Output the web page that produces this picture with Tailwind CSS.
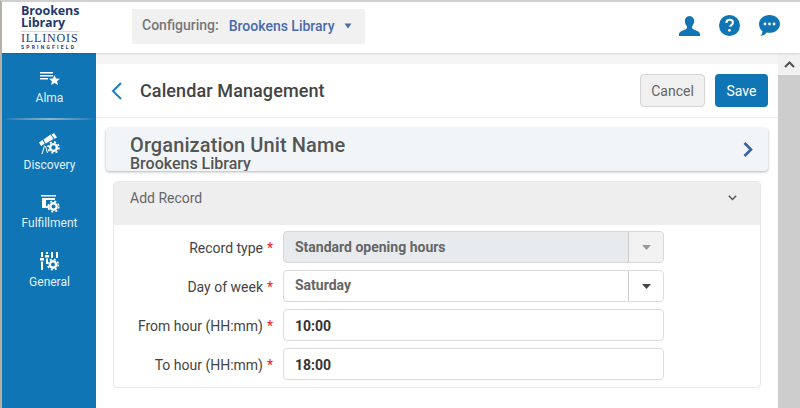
<!DOCTYPE html>
<html lang="en">
<head>
  <meta charset="UTF-8" />
  <title>Calendar Management</title>
  <script src="https://cdn.jsdelivr.net/npm/@tailwindcss/browser@4"></script>
</head>
<body class="font-['Roboto',sans-serif] bg-white text-[#444]">
  <div class="w-[800px] h-[408px] overflow-hidden flex flex-col border-t-2 border-t-[#d0d0d0] border-l-2 border-l-[#b5b0a8]">

    <!-- top bar -->
    <header class="h-[51px] shrink-0 flex items-center bg-white shadow-[0_1px_2px_rgba(0,0,0,0.12)] relative z-10">
      <div class="w-[130px] pl-[19px] shrink-0 flex flex-col text-[#1f3a6e]">
        <div class="text-[12.5px] leading-[11.5px] font-bold tracking-[-0.1px] font-['Open_Sans',sans-serif]">Brookens<br />Library</div>
        <div class="mt-[3px] w-[58px] border-t border-[#d5dbe6] pt-[1px] font-['Liberation_Serif',serif] text-[12px] leading-[11px] tracking-[0.85px]">ILLINOIS</div>
        <div class="mt-[1px] text-[5px] leading-[5px] tracking-[2.2px] font-bold whitespace-nowrap">SPRINGFIELD</div>
      </div>
      <div class="w-[233px] h-[35px] bg-[#f1f1f1] flex items-center pl-[10px] mb-[2px]">
        <span class="text-[14px] text-[#777] font-medium mb-[3px]">Configuring:</span>
        <span class="ml-[10px] text-[14px] text-[#4a69ae] font-medium">Brookens Library</span>
        <svg class="ml-[9px] mb-[1px]" width="8" height="6" viewBox="0 0 8 6"><path d="M0.5 0.5h7L4 5.500z" fill="#4a69ae" /></svg>
      </div>
      <div class="ml-auto flex items-center gap-[19px] pr-[20px] mb-[4px]">
        <svg width="21" height="20" viewBox="0 0 21 20" fill="#0f75b5"><path d="M10.500 0c3 0 4.600 2.200 4.600 5 0 2-.8 4-2 5.200v1.800c0 .8 1.200 1.300 3 2 2.400 1 4.400 1.700 4.900 3.800V20H0v-2.200c.5-2.100 2.500-2.800 4.900-3.800 1.800-.7 3-1.200 3-2v-1.800c-1.200-1.200-2-3.200-2-5.200 0-2.800 1.600-5 4.600-5z" /></svg>
        <svg width="21" height="21" viewBox="0 0 21 21"><circle cx="10.500" cy="10.500" r="10.500" fill="#0f75b5" /><path d="M7.300 8c.1-2 1.500-3.200 3.400-3.200 1.900 0 3.200 1.100 3.200 2.700 0 1.300-.7 2-1.600 2.600-.8.500-1 .8-1 1.700" fill="none" stroke="#fff" stroke-width="2" /><circle cx="10.400" cy="15.300" r="1.400" fill="#fff" /></svg>
        <svg width="21" height="21" viewBox="0 0 21 21"><path d="M10.500 0C16.300 0 21 3.900 21 8.900s-4.700 8.900-10.500 8.900c-1 0-1.900-.1-2.800-.3C6.500 19.200 4.300 20.600 1.500 21c1.100-1.200 1.800-2.700 2-4.800C1.300 14.600 0 11.900 0 8.900 0 3.900 4.700 0 10.500 0z" fill="#0f75b5" /><circle cx="6" cy="9" r="1.400" fill="#fff" /><circle cx="10.500" cy="9" r="1.400" fill="#fff" /><circle cx="15" cy="9" r="1.400" fill="#fff" /></svg>
      </div>
    </header>

    <div class="flex flex-1 min-h-0">
      <!-- left nav -->
      <nav class="w-[94px] shrink-0 pl-[1px] bg-[#0f75b5] text-[#e4f0f8] text-[12px] flex flex-col items-center">
        <div class="h-[65px] w-full flex flex-col items-center pt-[19px]">
          <svg width="20" height="14" viewBox="0 0 20 14" fill="#fff"><path d="M0 0h13v1.600H0zM0 3h13v1.600H0zM0 6h8v1.600H0z" /><path d="M14.500 3l1.500 3.500 4 .3-3 2.500 1 3.700-3.500-2L11 13l1-3.700-3-2.500 4-.3z" /></svg>
          <span class="mt-[5px] leading-[14px]">Alma</span>
        </div>
        <div class="h-[2px] w-full bg-linear-to-r from-[#0f75b5] via-[#8fb4cc] to-[#0f75b5]"></div>
        <div class="mt-[13px] flex flex-col items-center">
          <svg width="21" height="22" viewBox="0 0 21 22" fill="#fff"><path d="M0 9.500l3.500-2.500 2.200 3.500L2.200 13zM4.500 6.500l7-5 3 4.500-7.800 4.500zM12.500 1.500L15 0l3 4.500-2.300 1.200z" /><path d="M5.500 12.500L3 21M6.500 13l2 7" stroke="#fff" fill="none" /><circle cx="14.500" cy="14.500" r="3.400" fill="none" stroke="#fff" stroke-width="2.400" /><circle cx="14.500" cy="14.500" r="5.500" fill="none" stroke="#fff" stroke-width="1.600" stroke-dasharray="2 2.300" /></svg>
          <span class="mt-[3px] leading-[14px]">Discovery</span>
        </div>
        <div class="mt-[23px] flex flex-col items-center">
          <svg width="20" height="18" viewBox="0 0 20 18" fill="#fff"><path d="M1 0h15v1.500H1zM2 3h13v2H6v6h3v2H2z" /><circle cx="13.500" cy="11.500" r="3.200" fill="none" stroke="#fff" stroke-width="2.400" /><circle cx="13.500" cy="11.500" r="5.300" fill="none" stroke="#fff" stroke-width="1.600" stroke-dasharray="2 2.200" /></svg>
          <span class="mt-[3px] leading-[14px]">Fulfillment</span>
        </div>
        <div class="mt-[22px] flex flex-col items-center">
          <svg width="20" height="19" viewBox="0 0 20 19" fill="#fff"><path d="M1 0h2v5H1zM0 6h4v2.500H0zM1 9.500h2V18H1zM6 0h2v2H6zM5 3h4v2.500H5zM6 6.500h2V12H6zM11 0h2v6h-2zM16 0h2v6h-2z" /><circle cx="13" cy="12.500" r="3.200" fill="none" stroke="#fff" stroke-width="2.400" /><circle cx="13" cy="12.500" r="5.300" fill="none" stroke="#fff" stroke-width="1.600" stroke-dasharray="2 2.200" /></svg>
          <span class="mt-[4px] leading-[14px]">General</span>
        </div>
      </nav>

      <!-- main column -->
      <main class="w-[682px] shrink-0 bg-[#f5f5f5] pt-[11px] min-h-0">
        <div class="bg-white h-full">
          <div class="h-[54px] flex items-center border-b border-[#f0f0f0] pr-[10px]">
            <svg class="ml-[15px]" width="11" height="18" viewBox="0 0 11 18"><path d="M10 1L2 9l8 8" fill="none" stroke="#1a7fc1" stroke-width="2" /></svg>
            <h1 class="ml-[18px] text-[18px] font-medium text-[#444] tracking-[0.1px]">Calendar Management</h1>
            <button class="ml-auto w-[65px] h-[33px] pt-[1px] rounded-[4px] bg-[#f0f0f0] border border-[#d4d4d4] text-[14px] text-[#666]">Cancel</button>
            <button class="ml-[10px] w-[53px] h-[33px] pt-[1px] rounded-[4px] bg-[#0f75b5] text-[14px] text-white">Save</button>
          </div>

          <div class="mt-[10px] ml-[10px] w-[662px] h-[43px] rounded-[4px] bg-[#f1f5f7] shadow-[0_1px_3px_rgba(0,0,0,0.3)] flex items-center justify-between pl-[24px] pr-[15px]">
            <div class="h-[43px] flex flex-col text-[#555] font-medium overflow-hidden">
              <div class="h-[22px] mt-[6px] overflow-hidden text-[20px] leading-[22px] tracking-[0.1px]">Organization Unit Name</div>
              <div class="text-[16px] leading-[15px]">Brookens Library</div>
            </div>
            <svg width="10" height="15" viewBox="0 0 10 15"><path d="M1.500 1l6.500 6.500-6.500 6.500" fill="none" stroke="#3a5fa8" stroke-width="2.600" /></svg>
          </div>

          <section class="mt-[10px] ml-[17px] w-[648px] h-[207px] rounded-[4px] border border-[#e8e8e8] overflow-hidden">
            <div class="h-[43px] bg-[#eeeeee] flex items-start justify-between pl-[16px] pr-[23px] pt-[7px] text-[14px] leading-[18px] text-[#666]">
              <span>Add Record</span>
              <svg class="mt-[6px]" width="9" height="6" viewBox="0 0 9 6"><path d="M.8 .8l3.700 3.700 3.700-3.700" fill="none" stroke="#555" stroke-width="1.500" /></svg>
            </div>
            <div class="pt-[6px] flex flex-col gap-[7px]">
              <div class="flex items-center h-[32px]">
                <label class="w-[159px] pt-[2px] flex justify-end items-center text-[14px] text-[#444]">Record type<span class="ml-[4px] w-[6px] text-[#f02020]">*</span></label>
                <div class="ml-[10px] w-[381px] h-[32px] flex rounded-[4px] border border-[#d8d8d8] bg-[#e8ebee] text-[14px] font-bold text-[#666] overflow-hidden">
                  <span class="flex-1 pl-[11px] leading-[31px]">Standard opening hours</span>
                  <span class="w-[35px] bg-[#f2f2f2] border-l border-[#ccc] flex items-center justify-center"><svg width="9" height="5" viewBox="0 0 9 5"><path d="M0 0h9L4.500 5z" fill="#999" /></svg></span>
                </div>
              </div>
              <div class="flex items-center h-[32px]">
                <label class="w-[159px] pt-[2px] flex justify-end items-center text-[14px] text-[#444]">Day of week<span class="ml-[4px] w-[6px] text-[#f02020]">*</span></label>
                <div class="ml-[10px] w-[381px] h-[32px] flex rounded-[4px] border border-[#dcdcdc] bg-white text-[14px] font-bold text-[#666] overflow-hidden">
                  <span class="flex-1 pl-[11px] leading-[28px]">Saturday</span>
                  <span class="w-[35px] border-l border-[#ccc] flex items-center justify-center"><svg width="9" height="5" viewBox="0 0 9 5"><path d="M0 0h9L4.500 5z" fill="#444" /></svg></span>
                </div>
              </div>
              <div class="flex items-center h-[32px]">
                <label class="w-[159px] pt-[2px] flex justify-end items-center text-[14px] text-[#444]">From hour (HH:mm)<span class="ml-[4px] w-[6px] text-[#f02020]">*</span></label>
                <div class="ml-[10px] w-[381px] h-[32px] rounded-[4px] border border-[#dcdcdc] bg-white text-[14px] font-bold text-[#333] pl-[11px] leading-[32px]">10:00</div>
              </div>
              <div class="flex items-center h-[32px]">
                <label class="w-[159px] pt-[2px] flex justify-end items-center text-[14px] text-[#444]">To hour (HH:mm)<span class="ml-[4px] w-[6px] text-[#f02020]">*</span></label>
                <div class="ml-[10px] w-[381px] h-[32px] rounded-[4px] border border-[#dcdcdc] bg-white text-[14px] font-bold text-[#333] pl-[11px] leading-[32px]">18:00</div>
              </div>
            </div>
          </section>
        </div>
      </main>

      <!-- scrollbar -->
      <div class="flex-1 flex flex-col bg-[#cdcdcd]">
        <div class="h-[22px] bg-[#f1f1f1] flex items-center justify-center">
          <svg width="11" height="7" viewBox="0 0 11 7"><path d="M1 6l4.500-4.500L10 6" fill="none" stroke="#505050" stroke-width="2" /></svg>
        </div>
      </div>
    </div>
  </div>
</body>
</html>
